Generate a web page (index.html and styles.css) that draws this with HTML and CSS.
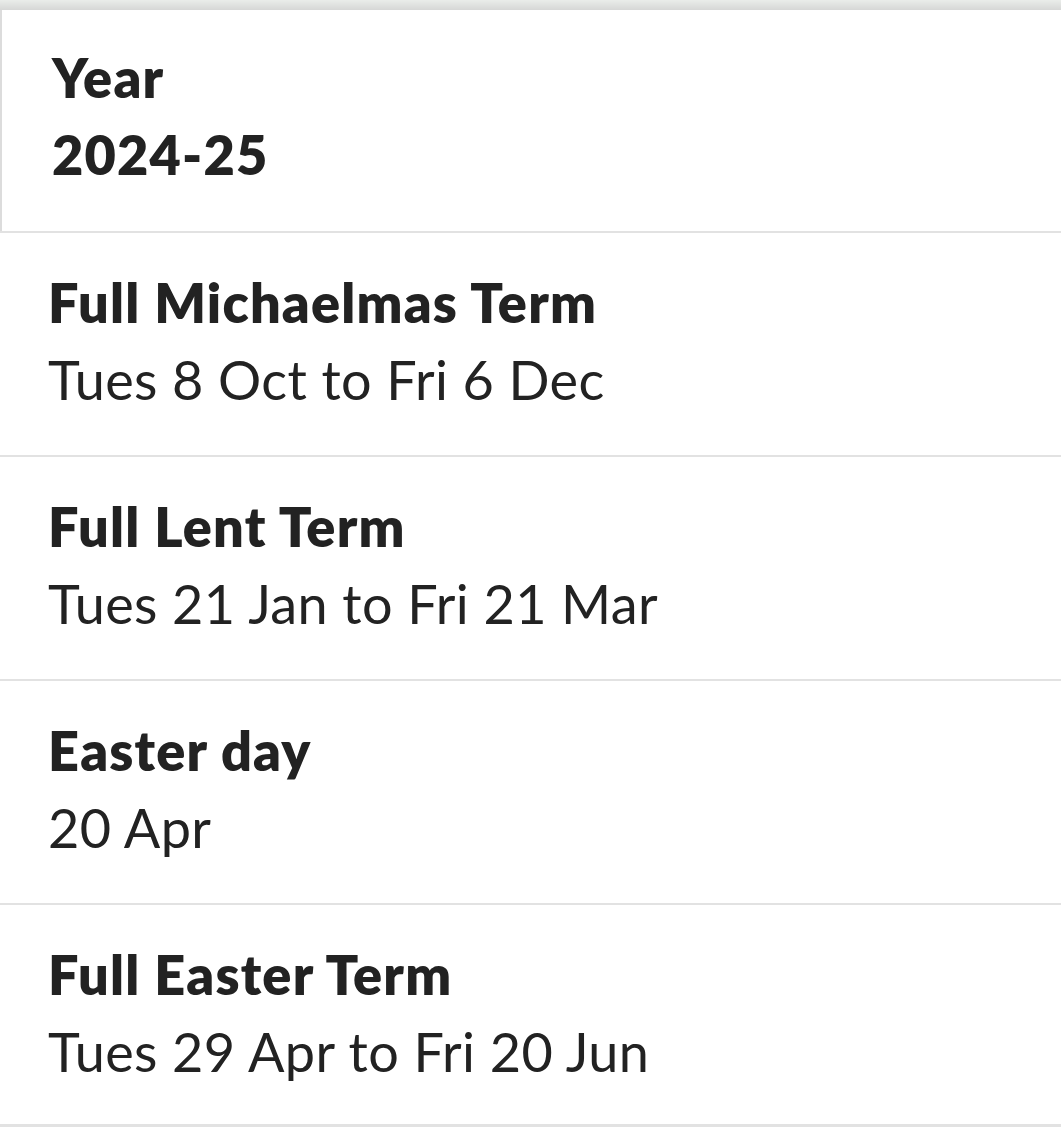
FILE: index.html
```html
<!DOCTYPE html>
<html>
<head>
<meta charset="utf-8">
<link rel="stylesheet" href="styles.css">
</head>
<body>
<div class="topbar"></div>
<div class="list">
  <div class="header">
    <div class="title">Year</div>
    <div class="title">2024-25</div>
  </div>
  <div class="row">
    <div class="title">Full Michaelmas Term</div>
    <div class="sub">Tues 8 Oct to Fri 6 Dec</div>
  </div>
  <div class="row">
    <div class="title">Full Lent Term</div>
    <div class="sub">Tues 21 Jan to Fri 21 Mar</div>
  </div>
  <div class="row">
    <div class="title">Easter day</div>
    <div class="sub">20 Apr</div>
  </div>
  <div class="row">
    <div class="title">Full Easter Term</div>
    <div class="sub">Tues 29 Apr to Fri 20 Jun</div>
  </div>
</div>
</body>
</html>
```

FILE: styles.css
```css
html, body {
  margin: 0;
  padding: 0;
  background: #ffffff;
}
body {
  font-family: Lato, "Noto Sans", sans-serif;
  color: #222222;
  height: 1132px;
  overflow: hidden;
}
.topbar {
  height: 10px;
  background: linear-gradient(#eaedea, #d6d7d6);
}
.list {
  display: flex;
  flex-direction: column;
}
.header {
  height: 221px;
  box-sizing: border-box;
  border-left: 2px solid #dcdcdc;
  padding: 29px 50px 0;
}
.row {
  border-top: 2px solid #e2e2e2;
  height: 224px;
  box-sizing: border-box;
  padding: 31px 48px 0;
}
.title {
  font-size: 54px;
  font-weight: 800;
  letter-spacing: 1.2px;
  line-height: 77px;
}
.sub {
  font-size: 54px;
  font-weight: 400;
  letter-spacing: 0.4px;
  line-height: 77px;
}
.list .row:last-child {
  border-bottom: 3px solid #e2e2e2;
}
```
